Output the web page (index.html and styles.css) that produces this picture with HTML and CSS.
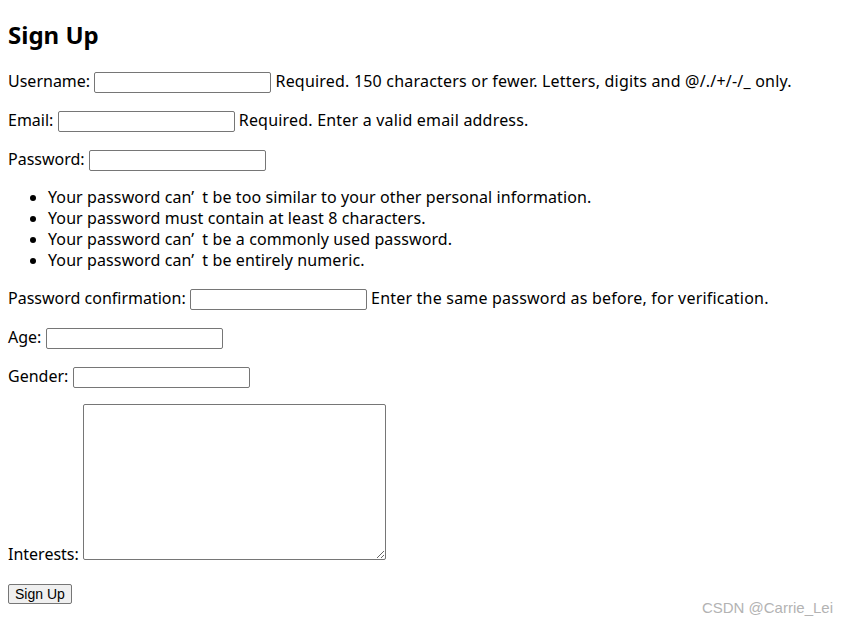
FILE: index.html
```html
<!DOCTYPE html>
<html lang="en">
<head>
  <meta charset="UTF-8" />
  <title>Sign Up</title>
  <link rel="stylesheet" href="styles.css">
</head>
<body>
  <h2>Sign Up</h2>
  <form method="post">
    <p>
      <label for="id_username">Username:</label>
      <input type="text" name="username" id="id_username">
      <span class="helptext">Required. 150 characters or fewer. Letters, digits and @/./+/-/_ only.</span>
    </p>
    <p>
      <label for="id_email">Email:</label>
      <input type="email" name="email" id="id_email">
      <span class="helptext">Required. Enter a valid email address.</span>
    </p>
    <p>
      <label for="id_password1">Password:</label>
      <input type="password" name="password1" id="id_password1">
    </p>
    <ul class="pw-rules">
      <li>Your password can’&ensp;t be too similar to your other personal information.</li>
      <li>Your password must contain at least 8 characters.</li>
      <li>Your password can’&ensp;t be a commonly used password.</li>
      <li>Your password can’&ensp;t be entirely numeric.</li>
    </ul>
    <p>
      <label for="id_password2">Password confirmation:</label>
      <input type="password" name="password2" id="id_password2">
      <span class="helptext">Enter the same password as before, for verification.</span>
    </p>
    <p>
      <label for="id_age">Age:</label>
      <input type="text" name="age" id="id_age">
    </p>
    <p>
      <label for="id_gender">Gender:</label>
      <input type="text" name="gender" id="id_gender">
    </p>
    <p>
      <label for="id_interests">Interests:</label>
      <textarea name="interests" id="id_interests"></textarea>
    </p>
    <button type="submit" class="submit">Sign Up</button>
  </form>

  <div class="watermark">CSDN @Carrie_Lei</div>
</body>
</html>
```

FILE: styles.css
```css
body {
  font-family: "Noto Sans", "Noto Sans CJK SC", sans-serif;
  font-size: 16px;
  color: #000;
  background: #fff;
  margin: 0;
  padding: 8px;
}

h2 {
  font-size: 24px;
  line-height: 32px;
  margin: 11px 0 19px;
}

p {
  margin: 16px 0;
  line-height: 23px;
}

.helptext {
  letter-spacing: 0.2px;
}

input {
  width: 177px;
  height: 21px;
  box-sizing: border-box;
  border: 1px solid #767676;
  border-radius: 2px;
  font-size: 13px;
}

.pw-rules {
  margin: 16px 0;
  padding-left: 40px;
  line-height: 21px;
  letter-spacing: 0.1px;
}

textarea {
  width: 303px;
  height: 156px;
  box-sizing: border-box;
  border: 1px solid #767676;
  border-radius: 2px;
  vertical-align: baseline;
}

.submit {
  font-family: "Liberation Sans", Arial, sans-serif;
  font-size: 14px;
  height: 20px;
  padding: 0 6px;
  border: 1px solid #767676;
  border-radius: 2px;
  background: #efefef;
}

.watermark {
  position: absolute;
  right: 14px;
  top: 599px;
  font-family: "Liberation Sans", Arial, sans-serif;
  font-size: 15px;
  color: #b3b3b3;
}
```
